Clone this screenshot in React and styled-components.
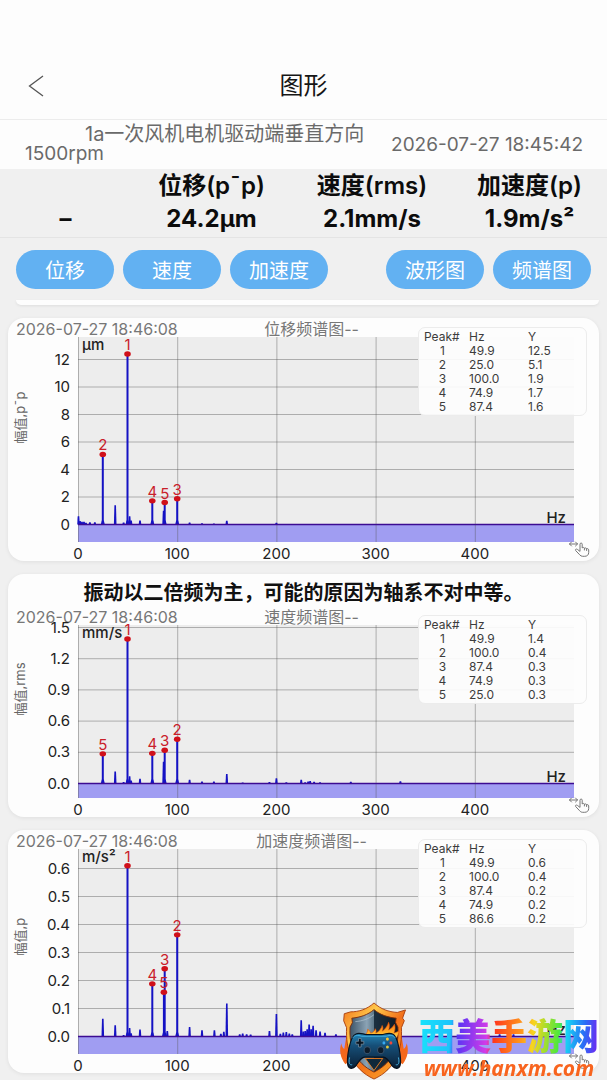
import React from "react";
import styled, { createGlobalStyle } from "styled-components";

const GlobalStyle = createGlobalStyle`
  *, *::before, *::after { box-sizing: border-box; }
  body {
    margin: 0;
    background: #f0f0f0;
    color: #111;
    font-family: Inter, "Noto Sans CJK SC", sans-serif;
  }
  button { font: inherit; border: 0; padding: 0; cursor: pointer; }
`;

const Screen = styled.div`
  display: flex;
  flex-direction: column;
  min-height: 100vh;
`;

const NavBar = styled.header`
  display: grid;
  grid-template-columns: 72px 1fr 72px;
  align-items: center;
  height: 120px;
  padding-top: 52px;
  background: #fdfdfd;
  border-bottom: 1px solid #ececec;
`;

const BackButton = styled.button`
  display: flex;
  align-items: center;
  justify-content: center;
  height: 44px;
  background: transparent;
  color: #555;
`;

const NavTitle = styled.h1`
  margin: 0;
  font-size: 24px;
  font-weight: 400;
  line-height: 32px;
  text-align: center;
  color: #161616;
`;

const DeviceRow = styled.section`
  display: flex;
  align-items: center;
  justify-content: space-between;
  gap: 16px;
  padding: 5px 24px 6px 25px;
  background: #fdfdfd;
  color: #6a6a6a;
  font-size: 19px;
  line-height: 19px;
`;

const DeviceName = styled.p`
  flex: 1;
  margin: 0;
  text-indent: 60px;
`;

const Machine = styled.span`
  font-size: 20px;
`;

const DeviceTime = styled.time`
  white-space: nowrap;
`;

const Stats = styled.section`
  display: grid;
  grid-template-columns: 131fr 161fr 160fr 155fr;
  height: 69px;
  border-bottom: 1px solid #e4e4e4;
  background: #f0f0f0;
`;

const Stat = styled.div`
  display: flex;
  flex-direction: column;
  align-items: center;
  font-size: 24px;
  font-weight: 700;
  line-height: 33px;
  white-space: nowrap;
  color: #0c0c0c;
`;

const StatLabel = styled.span`
  height: 33px;
  font-weight: 600;
`;

const StatValue = styled.span`
  height: 33px;
`;

const Toolbar = styled.nav`
  display: flex;
  align-items: center;
  gap: 9px;
  padding: 12px 16px 11px;
`;

const Spacer = styled.span`
  flex: 1;
`;

const Pill = styled.button`
  flex: 0 0 98px;
  height: 39px;
  border-radius: 20px;
  background: #62b1f2;
  color: #fff;
  font-size: 20px;
`;

const List = styled.main`
  display: flex;
  flex-direction: column;
  gap: 13px;
  padding: 0 8px 6px;
`;

const CardEnd = styled.div`
  height: 5px;
  margin: 0 0 0 8px;
  border-radius: 0 0 10px 10px;
  background: #fdfdfd;
  box-shadow: 0 1px 3px rgba(0, 0, 0, 0.08);
`;

const Card = styled.section`
  border-radius: 16px;
  background: #fdfdfd;
  box-shadow: 0 1px 4px rgba(0, 0, 0, 0.07);
`;

const Finding = styled.h2`
  margin: 0;
  padding: 7px 0 1px;
  font-size: 20px;
  font-weight: 700;
  line-height: 24px;
  text-align: center;
  white-space: nowrap;
  color: #111;
`;

const CardHead = styled.div`
  display: grid;
  grid-template-columns: 1fr auto 1fr;
  height: 19px;
  padding: 3px 8px 0;
  font-size: 16px;
  line-height: 16px;
  color: #777;
  white-space: nowrap;
`;

const ChartTitle = styled.span`
  padding-left: 16px;
`;

const PlotArea = styled.div`
  position: relative;
`;

const Plot = styled.svg`
  display: block;
  width: 100%;
  height: auto;
  overflow: visible;
`;

const TickText = styled.text`
  font-size: 15px;
  fill: #222;
  text-anchor: ${(p) => p.$anchor};
`;

const UnitText = styled(TickText)`
  font-weight: 500;
`;

const PeakText = styled.text`
  font-size: 15px;
  fill: #c9202a;
  text-anchor: middle;
`;

const AxisText = styled.text`
  font-size: 13px;
  fill: #666;
`;

const PeakPanel = styled.div`
  position: absolute;
  top: -10px;
  right: 12px;
  width: 169px;
  padding: 2px 0 1px 5px;
  border: 1px solid #ececec;
  border-radius: 7px;
  background: rgba(253, 253, 253, 0.92);
`;

const PeakTable = styled.table`
  width: 100%;
  border-collapse: collapse;
  table-layout: fixed;
  font-size: 12px;
  line-height: 14px;
  color: #3c3c3c;

  th, td {
    padding: 0;
    font-weight: 400;
    text-align: left;
  }
  th:first-child { width: 45px; }
  th:nth-child(2) { width: 59px; }
  td:first-child { padding-right: 8px; text-align: center; }
`;

const Watermark = styled.aside`
  position: fixed;
  right: 8px;
  bottom: 0;
  display: flex;
  align-items: flex-end;
  gap: 10px;
  pointer-events: none;
`;

const Brand = styled.div`
  display: flex;
  flex-direction: column;
`;

const BrandName = styled.strong`
  font-family: "Noto Sans CJK SC", sans-serif;
  font-size: 36px;
  font-weight: 900;
  line-height: 44px;
  color: transparent;
  background: linear-gradient(
    95deg,
    #18e4fb 0%, #1cc4fb 18%, #5a35f4 22%, #d23be8 38%,
    #ff3a1c 42%, #ff9a1c 57%, #f9d41e 63%, #4fe83c 77%,
    #14d6f4 81%, #2a6cf6 91%, #7a1cf0 100%
  );
  background-clip: text;
  -webkit-background-clip: text;
`;

const BrandUrl = styled.span`
  font-family: "Noto Sans", sans-serif;
  font-size: 21px;
  font-style: italic;
  font-weight: 700;
  line-height: 24px;
  text-align: center;
  color: #f8641e;
`;

const X0 = 70;
const X_SPAN = 496;
const VIEW_WIDTH = 591;
const xOf = (hz) => X0 + (hz / 500) * X_SPAN;

function GestureIcon({ x, y }) {
  return (
    <g transform={`translate(${x} ${y})`} fill="none" stroke="#777" strokeWidth="1" strokeLinecap="round" strokeLinejoin="round">
      <path d="M.5 3h8M2.500 1 .5 3l2 2M6.500 1l2 2-2 2" />
      <path fill="#fdfdfd" d="M11 10V3.200c0-1.600 2.200-1.600 2.200 0V7c.8-1 2-.6 2.200.3.700-.7 2-.4 2.200.5.900-.5 2.100 0 2.100 1.200v2.500c0 2.500-1.700 3.800-4 3.800h-2c-1.300 0-2.200-.5-3-1.500l-4-4.200c-.9-1 .3-2.100 1.400-1.400z" />
      <path d="M15.400 7.500V9M17.600 8v1.500" />
    </g>
  );
}

function SpectrumPlot({ height, bottom, zero, perUnit, ticks, digits, unit, axis, peaks, minor, name }) {
  const yOf = (v) => zero - v * perUnit;
  return (
    <Plot viewBox={`0 0 ${VIEW_WIDTH} ${height}`} role="img" aria-label={name}>
      <rect x={X0} y="0" width={X_SPAN} height={bottom} fill="#ededed" />
      <rect x={X0} y={zero} width={X_SPAN} height={bottom - zero} fill="#a09df2" />
      <g stroke="#555" strokeOpacity="0.42" strokeWidth="1">
        {ticks.map((t) => (
          <line key={t} x1={X0} x2={X0 + X_SPAN} y1={yOf(t)} y2={yOf(t)} />
        ))}
        {[0, 100, 200, 300, 400].map((t) => (
          <line key={t} x1={xOf(t) + 0.5} x2={xOf(t) + 0.5} y1="0" y2={bottom} />
        ))}
      </g>
      <g fill="#1512c4">
        {minor.map(([hz, v]) => (
          <path key={hz} d={`M${xOf(hz) - 1.3} ${zero}L${xOf(hz) - 0.8} ${yOf(v)}h1.600L${xOf(hz) + 1.3} ${zero}z`} />
        ))}
        {peaks.map(([n, hz, v]) => (
          <g key={n}>
            <rect x={xOf(hz) - 1} y={yOf(v)} width="2" height={v * perUnit} />
            <path d={`M${xOf(hz) - 2} ${zero}l1-4h2l1 4z`} />
          </g>
        ))}
      </g>
      <line x1={X0} x2={X0 + X_SPAN} y1={zero} y2={zero} stroke="#3c0c92" strokeWidth="1.300" />
      {peaks.map(([n, hz, v]) => (
        <g key={n}>
          <ellipse cx={xOf(hz)} cy={yOf(v)} rx="3.300" ry="2.700" fill="#d0101a" />
          <PeakText x={xOf(hz)} y={yOf(v) - 4}>{n}</PeakText>
        </g>
      ))}
      {ticks.map((t) => (
        <TickText key={t} $anchor="end" x="62" y={yOf(t) + 5}>{t.toFixed(digits)}</TickText>
      ))}
      {[0, 100, 200, 300, 400].map((t) => (
        <TickText key={t} $anchor="middle" x={xOf(t)} y={bottom + 17}>{t}</TickText>
      ))}
      <UnitText $anchor="start" x="74" y="13">{unit}</UnitText>
      <UnitText $anchor="end" x="558" y={zero - 2}>Hz</UnitText>
      <AxisText transform={`translate(17 ${bottom / 2 + 4}) rotate(-90)`}>{axis}</AxisText>
      <GestureIcon x={561} y={bottom - 1} />
    </Plot>
  );
}

function PeakList({ rows }) {
  return (
    <PeakPanel>
      <PeakTable>
        <thead>
          <tr><th scope="col">Peak#</th><th scope="col">Hz</th><th scope="col">Y</th></tr>
        </thead>
        <tbody>
          {rows.map(([hz, y], i) => (
            <tr key={hz}><td>{i + 1}</td><td>{hz}</td><td>{y}</td></tr>
          ))}
        </tbody>
      </PeakTable>
    </PeakPanel>
  );
}

function SpectrumCard({ title, finding, rows, plot }) {
  return (
    <Card>
      {finding && <Finding>{finding}</Finding>}
      <CardHead>
        <time>2026-07-27 18:46:08</time>
        <ChartTitle>{title}</ChartTitle>
      </CardHead>
      <PlotArea>
        <SpectrumPlot name={title} {...plot} />
        <PeakList rows={rows} />
      </PlotArea>
    </Card>
  );
}

function ShieldLogo() {
  return (
    <svg width="70" height="78" viewBox="0 0 240 246" preserveAspectRatio="none" aria-hidden="true">
      <defs>
        <linearGradient id="rim" x1="0" y1="0" x2="1" y2="1">
          <stop offset="0" stopColor="#f2701a" />
          <stop offset="0.3" stopColor="#ffc84a" />
          <stop offset="0.55" stopColor="#f2701a" />
          <stop offset="1" stopColor="#ffb52e" />
        </linearGradient>
        <linearGradient id="steel" x1="0" y1="0" x2="1" y2="0">
          <stop offset="0" stopColor="#3c5468" />
          <stop offset="0.35" stopColor="#8ba3b5" />
          <stop offset="0.5" stopColor="#5d7688" />
          <stop offset="0.51" stopColor="#1c2f40" />
          <stop offset="1" stopColor="#0e1a26" />
        </linearGradient>
        <linearGradient id="pad" x1="0" y1="0" x2="0" y2="1">
          <stop offset="0" stopColor="#2486b8" />
          <stop offset="0.35" stopColor="#164f78" />
          <stop offset="1" stopColor="#0a1f36" />
        </linearGradient>
        <linearGradient id="fire" x1="0" y1="0" x2="0" y2="1">
          <stop offset="0" stopColor="#ff6a10" />
          <stop offset="0.6" stopColor="#ffb32a" />
          <stop offset="1" stopColor="#ffe67a" />
        </linearGradient>
      </defs>
      <path fill="#f4681c" d="M22 196C4 176 0 150 8 130c2 14 10 18 10 18l8-44 14 80zM218 196c18-20 22-46 14-66-2 14-10 18-10 18l-8-44-14 80z" />
      <path fill="url(#rim)" stroke="#a83c0c" strokeWidth="3" strokeLinejoin="round" d="M120 3c24 20 50 28 80 30l28-8-10 26 6 8-10 22c4 66-18 130-94 162C44 211 22 147 26 81L16 59l2-22 22-6c28 0 56-8 80-28z" />
      <path fill="url(#steel)" stroke="#7a2a0a" strokeWidth="3" strokeLinejoin="round" d="M120 24c22 17 46 24 76 27l-2 14 8 14c4 60-16 112-82 142C54 191 34 139 38 79l8-14-2-14c30-3 54-10 76-27z" />
      <path fill="none" stroke="#b9cad6" strokeWidth="3" opacity=".7" d="M56 62c24-2 44-8 64-22" />
      <path fill="url(#fire)" stroke="#e0560c" strokeWidth="2" d="M92 108c0-10 8-14 6-22 10 4 10 12 10 12s14-2 16-14c6 6 2 14 2 14s16-6 22-24c6 8 0 18 0 18s16-8 22-28c6 12 0 24 0 24s14-6 20-18c6 14-2 28-2 28l18-6c-2 12-14 28-14 28z" />
      <path fill="#10283a" stroke="#f08020" strokeWidth="3" d="M90 178h60l-30 38z" />
      <path fill="url(#pad)" stroke="#07121f" strokeWidth="4" strokeLinejoin="round" d="M58 101c12-6 24 1 36 2h52c12-1 24-8 38-2 20 8 30 80 26 97-3 14-18 14-27 4-9-10-15-26-31-28H88c-16 2-22 18-31 28-9 10-24 10-27-4-4-18 6-89 28-97z" />
      <path fill="none" stroke="#46b4e6" strokeWidth="3" strokeLinecap="round" d="M48 112c6-8 16-8 30-4h84c14-4 24-4 30 4M36 176c-4 16 0 24 8 22M204 176c4 16 0 24-8 22" />
      <path fill="#0a1622" stroke="#8ea4b6" strokeWidth="2" d="M67 115h9v9h9v9h-9v9h-9v-9h-9v-9h9z" />
      <circle cx="97" cy="152" r="11" fill="#0d1c2b" stroke="#35506a" strokeWidth="4" />
      <circle cx="143" cy="152" r="11" fill="#0d1c2b" stroke="#35506a" strokeWidth="4" />
      <circle cx="166" cy="117" r="5" fill="#ffc52c" />
      <circle cx="154" cy="129" r="5" fill="#36a8f0" />
      <circle cx="178" cy="129" r="5" fill="#f0483c" />
      <circle cx="166" cy="142" r="5" fill="#e4c83c" />
    </svg>
  );
}

const stats = [
  { label: "\u00a0", value: "–" },
  { label: "位移(p¯p)", value: "24.2µm" },
  { label: "速度(rms)", value: "2.1mm/s" },
  { label: "加速度(p)", value: "1.9m/s²" },
];

const charts = [
  {
    title: "位移频谱图--",
    rows: [["49.9", "12.5"], ["25.0", "5.1"], ["100.0", "1.9"], ["74.9", "1.7"], ["87.4", "1.6"]],
    plot: {
      height: 224, bottom: 205, zero: 187.5, perUnit: 13.75, digits: 0,
      ticks: [0, 2, 4, 6, 8, 10, 12], unit: "µm", axis: "幅值,p¯p",
      peaks: [[1, 49.9, 12.4], [2, 25, 5.1], [3, 100, 1.87], [4, 74.9, 1.72], [5, 87.4, 1.6]],
      minor: [[0.5, 0.6], [2, 0.25], [4, 0.2], [6, 0.2], [8, 0.12], [12, 0.17], [17, 0.17], [37.5, 1.4], [46, 0.15],
        [52, 0.6], [53.5, 0.3], [62.5, 0.3], [86.3, 1], [112.5, 0.15], [125, 0.1], [137, 0.08], [150, 0.27], [200, 0.12]],
    },
  },
  {
    title: "速度频谱图--",
    finding: "振动以二倍频为主，可能的原因为轴系不对中等。",
    rows: [["49.9", "1.4"], ["100.0", "0.4"], ["87.4", "0.3"], ["74.9", "0.3"], ["25.0", "0.3"]],
    plot: {
      height: 192, bottom: 173, zero: 158.5, perUnit: 104, digits: 1,
      ticks: [0, 0.3, 0.6, 0.9, 1.2, 1.5], unit: "mm/s", axis: "幅值,rms",
      peaks: [[1, 49.9, 1.39], [2, 100, 0.425], [3, 87.4, 0.32], [4, 74.9, 0.29], [5, 25, 0.285]],
      minor: [[37.5, 0.115], [46, 0.015], [52, 0.07], [53.5, 0.03], [62.5, 0.045], [86.3, 0.21], [112.5, 0.035],
        [125, 0.02], [137, 0.02], [150, 0.092], [166, 0.01], [193, 0.015], [200, 0.05], [210, 0.012], [225, 0.035],
        [229, 0.012], [232, 0.02], [234, 0.025], [238, 0.016], [244, 0.012], [275, 0.016], [325, 0.022]],
    },
  },
  {
    title: "加速度频谱图--",
    rows: [["49.9", "0.6"], ["100.0", "0.4"], ["87.4", "0.2"], ["74.9", "0.2"], ["86.6", "0.2"]],
    plot: {
      height: 224, bottom: 205, zero: 187.5, perUnit: 280, digits: 1,
      ticks: [0, 0.1, 0.2, 0.3, 0.4, 0.5, 0.6], unit: "m/s²", axis: "幅值,p",
      peaks: [[1, 49.9, 0.61], [2, 100, 0.363], [3, 87.4, 0.242], [4, 74.9, 0.188], [5, 86.6, 0.158]],
      minor: [[25, 0.063], [37.5, 0.04], [46, 0.005], [52, 0.03], [53.5, 0.012], [62.5, 0.025], [90, 0.02],
        [112.5, 0.034], [125, 0.022], [137.5, 0.022], [144, 0.01], [147, 0.017], [150, 0.118], [163, 0.008],
        [166, 0.011], [170, 0.008], [174, 0.007], [193, 0.02], [200, 0.08], [204, 0.01], [207, 0.014], [210, 0.016],
        [213, 0.011], [216, 0.008], [225, 0.058], [227, 0.018], [229, 0.02], [231, 0.026], [233, 0.043],
        [235, 0.026], [237, 0.038], [240, 0.022], [244, 0.018], [249, 0.013], [260, 0.008], [275, 0.008],
        [425, 0.008], [439, 0.008]],
    },
  },
];

export default function App() {
  return (
    <>
      <GlobalStyle />
      <Screen>
        <NavBar>
          <BackButton type="button" aria-label="返回">
            <svg width="16" height="22" viewBox="0 0 16 22" fill="none" stroke="currentColor" strokeWidth="1.300">
              <path d="M15 1 1.500 11 15 21" />
            </svg>
          </BackButton>
          <NavTitle>图形</NavTitle>
        </NavBar>
        <DeviceRow>
          <DeviceName>
            <Machine>1a一次风机电机驱动端垂直方向</Machine> 1500rpm
          </DeviceName>
          <DeviceTime>2026-07-27 18:45:42</DeviceTime>
        </DeviceRow>
        <Stats>
          {stats.map((s) => (
            <Stat key={s.label}>
              <StatLabel>{s.label}</StatLabel>
              <StatValue>{s.value}</StatValue>
            </Stat>
          ))}
        </Stats>
        <Toolbar>
          <Pill type="button">位移</Pill>
          <Pill type="button">速度</Pill>
          <Pill type="button">加速度</Pill>
          <Spacer />
          <Pill type="button">波形图</Pill>
          <Pill type="button">频谱图</Pill>
        </Toolbar>
        <List>
          <CardEnd />
          {charts.map((c) => (
            <SpectrumCard key={c.title} {...c} />
          ))}
        </List>
      </Screen>
      <Watermark>
        <ShieldLogo />
        <Brand>
          <BrandName>西美手游网</BrandName>
          <BrandUrl>www.hanxm.com</BrandUrl>
        </Brand>
      </Watermark>
    </>
  );
}
